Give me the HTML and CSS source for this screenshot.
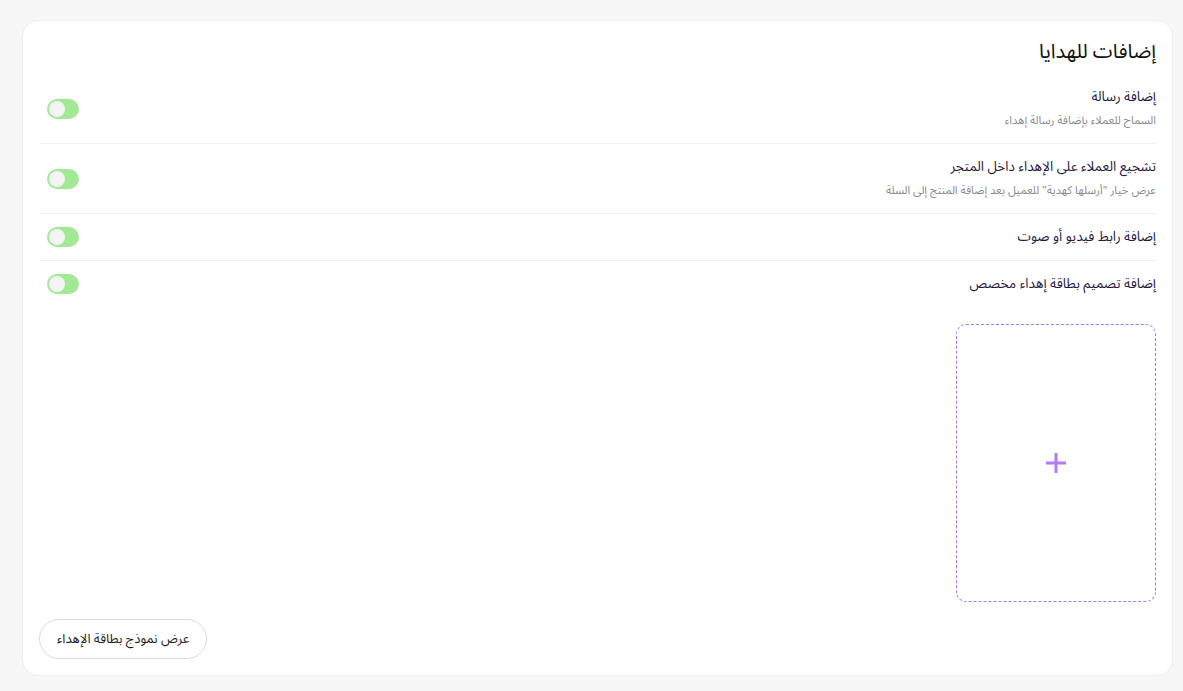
FILE: index.html
```html
<!DOCTYPE html>
<html lang="ar" dir="rtl">
<head>
<meta charset="utf-8">
<link rel="stylesheet" href="styles.css">
</head>
<body>
<div class="page">
  <section class="card">
    <h2 class="card-title">إضافات للهدايا</h2>
    <div class="rows">
      <div class="row">
        <div class="row-text">
          <div class="row-title">إضافة رسالة</div>
          <div class="row-desc">السماح للعملاء بإضافة رسالة إهداء</div>
        </div>
        <span class="toggle"><span class="knob"></span></span>
      </div>
      <div class="row">
        <div class="row-text">
          <div class="row-title">تشجيع العملاء على الإهداء داخل المتجر</div>
          <div class="row-desc">عرض خيار "أرسلها كهدية" للعميل بعد إضافة المنتج إلى السلة</div>
        </div>
        <span class="toggle"><span class="knob"></span></span>
      </div>
      <div class="row">
        <div class="row-text">
          <div class="row-title">إضافة رابط فيديو أو صوت</div>
        </div>
        <span class="toggle"><span class="knob"></span></span>
      </div>
      <div class="row last">
        <div class="row-text">
          <div class="row-title">إضافة تصميم بطاقة إهداء مخصص</div>
        </div>
        <span class="toggle"><span class="knob"></span></span>
      </div>
    </div>
    <div class="upload">
      <svg class="plus" width="22" height="22" viewBox="0 0 22 22"><path d="M11 1v20M1 11h20" stroke="#b07cf8" stroke-width="3" fill="none"/></svg>
    </div>
    <div class="actions">
      <button class="btn">عرض نموذج بطاقة الإهداء</button>
    </div>
  </section>
</div>
</body>
</html>
```
FILE: styles.css
```css
* { box-sizing: border-box; }
html, body { margin: 0; padding: 0; }
body {
  background: #f7f7f7;
  font-family: "Noto Sans Arabic", "DejaVu Sans", "Noto Sans", sans-serif;
  color: #1d1d1f;
  width: 1183px;
  height: 691px;
  overflow: hidden;
}
.page {
  padding: 20px 10px 15px 22px;
}
.card {
  background: #fff;
  border: 1px solid #eeeeee;
  border-radius: 16px;
  padding: 16px;
  height: 656px;
  display: flex;
  flex-direction: column;
}
.card-title {
  margin: 0 0 7px;
  font-size: 20px;
  line-height: 30px;
  font-weight: 400;
  color: #111;
}
.rows { display: flex; flex-direction: column; }
.row {
  display: flex;
  align-items: center;
  justify-content: space-between;
  padding: 12px 0;
  border-bottom: 1px solid #f0f0f0;
}
.row.has-desc { padding-bottom: 14px; }
.row.last { border-bottom: none; }
.row-text { display: flex; flex-direction: column; gap: 3px; }
.row-text:has(.row-desc) { padding-bottom: 2px; }
.row-title {
  font-size: 13.5px;
  line-height: 22px;
  color: #261a3d;
}
.row-desc {
  font-size: 11.3px;
  line-height: 18px;
  color: #8a8a8a;
}
.toggle {
  width: 32px;
  height: 20px;
  border-radius: 10px;
  background: #a2e996;
  display: flex;
  align-items: center;
  justify-content: flex-end;
  padding: 0 2px;
  margin-left: 8px;
}
.knob {
  width: 16px;
  height: 16px;
  border-radius: 50%;
  background: #f4f4f4;
}
.upload {
  margin-top: 17px;
  width: 200px;
  height: 280px;
  border: 1px dashed #aa72f8;
  border-radius: 10px;
  display: flex;
  align-items: center;
  justify-content: center;
}
.actions {
  margin-top: 17px;
  display: flex;
  justify-content: flex-end;
}
.btn {
  font-family: inherit;
  font-size: 13px;
  color: #1d1d1f;
  background: #fff;
  border: 1px solid #dcd8e0;
  border-radius: 20px;
  height: 40px;
  padding: 0 17px;
  margin-left: 0;
}
```
